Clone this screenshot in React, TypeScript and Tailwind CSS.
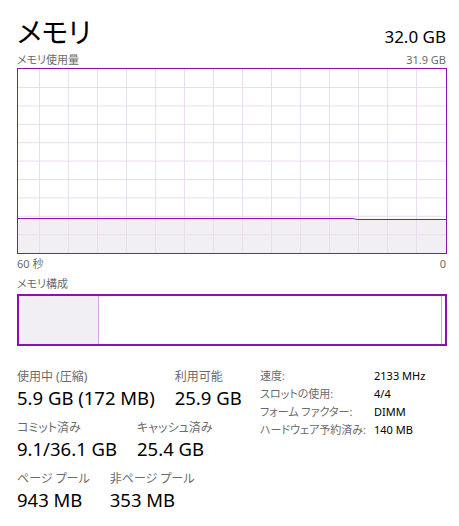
import React from "react"

const FONT = "[font-family:'Noto_Sans','Noto_Sans_CJK_JP',sans-serif] [font-feature-settings:'palt']"

const stats = [
  { label: "速度:", value: "2133 MHz" },
  { label: "スロットの使用:", value: "4/4" },
  { label: "フォーム ファクター:", value: "DIMM" },
  { label: "ハードウェア予約済み:", value: "140 MB" },
]

function UsageGraph() {
  const w = 428
  const h = 184
  const vlines = Array.from({ length: 14 }, (_, i) => 21.5 + i * 29)
  const hlines = Array.from({ length: 9 }, (_, i) => 18.5 + i * 18.4)
  const lineY = 149.5
  return (
    <svg width={w} height={h} className="block">
      <rect x={0} y={lineY} width={w} height={h - lineY} fill="#f2eff4" />
      {vlines.map((x) => (
        <line key={"v" + x} x1={x} y1={0} x2={x} y2={h} stroke="#ecdcf1" strokeWidth={1} />
      ))}
      {hlines.map((y) => (
        <line key={"h" + y} x1={0} y1={y} x2={w} y2={y} stroke="#ecdcf1" strokeWidth={1} />
      ))}
      <polyline
        points={`0,${lineY} 334,${lineY} 340,${lineY + 1} ${w},${lineY + 1}`}
        fill="none"
        stroke="#8b12ae"
        strokeWidth={1}
      />
    </svg>
  )
}

function Stat({ label, value }: { label: string; value: string }) {
  return (
    <div className="flex flex-col">
      <span className="text-[12px] leading-[16px] text-[#6b6b6b]">{label}</span>
      <span className="text-[18.5px] leading-[26px] text-black">{value}</span>
    </div>
  )
}

export default function App() {
  return (
    <div className={`w-[459px] h-[526px] bg-white pl-[17px] pr-[13px] pt-[14px] ${FONT}`}>
      {/* ヘッダー */}
      <div className="flex items-end justify-between">
        <h1 className="text-[28px] leading-[36px] text-black">メモリ</h1>
        <span className="text-[17px] leading-[24px] mb-[1px] text-black">32.0 GB</span>
      </div>
      <div className="flex justify-between text-[11px] leading-[16px] text-[#6b6b6b] mt-[2px]">
        <span>メモリ使用量</span>
        <span>31.9 GB</span>
      </div>

      {/* 使用量グラフ */}
      <div className="border border-[#8b12ae] w-[430px] h-[186px]">
        <UsageGraph />
      </div>
      <div className="flex justify-between text-[11px] leading-[16px] text-[#6b6b6b] mt-[2px]">
        <span>60 秒</span>
        <span>0</span>
      </div>

      {/* メモリ構成 */}
      <div className="text-[11px] leading-[16px] text-[#6b6b6b] mt-[4px]">メモリ構成</div>
      <div className="flex border-2 border-[#8b12ae] w-[430px] h-[52px] mt-[2px]">
        <div className="w-[80px] bg-[#f2eff4] border-r border-[#cfa6df]" />
        <div className="flex-1" />
        <div className="w-[4px] border-l border-[#cfa6df]" />
      </div>

      {/* 統計 */}
      <div className="flex mt-[23px]">
        <div className="flex flex-col gap-[9px] w-[243px]">
          <div className="flex gap-[20px]">
            <Stat label="使用中 (圧縮)" value="5.9 GB (172 MB)" />
            <Stat label="利用可能" value="25.9 GB" />
          </div>
          <div className="flex gap-[20px]">
            <Stat label="コミット済み" value="9.1/36.1 GB" />
            <Stat label="キャッシュ済み" value="25.4 GB" />
          </div>
          <div className="flex gap-[20px]">
            <Stat label="ページ プール" value="943 MB" />
            <Stat label="非ページ プール" value="353 MB" />
          </div>
        </div>
        <div className="flex flex-col -mt-[2px]">
          {stats.map((s) => (
            <div key={s.label} className="flex text-[11px] leading-[18px]">
              <span className="w-[114px] text-[#6b6b6b]">{s.label}</span>
              <span className="text-black">{s.value}</span>
            </div>
          ))}
        </div>
      </div>
    </div>
  )
}
